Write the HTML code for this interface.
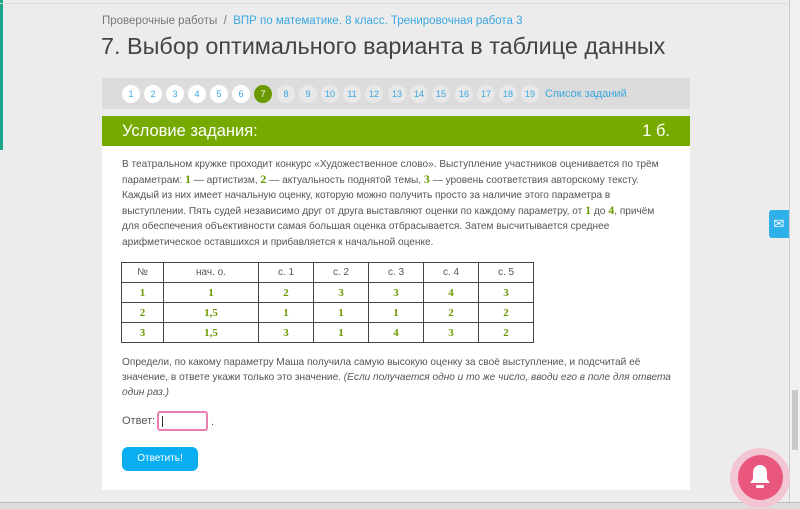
<!DOCTYPE html>
<html><head><meta charset="utf-8"><style>
*{margin:0;padding:0;box-sizing:border-box}
body{width:800px;height:509px;background:#ececec;font-family:"Liberation Sans",sans-serif;position:relative;overflow:hidden;color:#555}
.abs{position:absolute}
.bc{left:102px;top:15px;font-size:11.5px;color:#777}
.bc span{color:#3aa7e0}
h1{position:absolute;left:101px;top:33px;font-size:23.4px;font-weight:normal;color:#444}
.nav{left:102px;top:78px;width:588px;height:31px;background:#dcdcdc}
.c{position:absolute;top:7px;width:18px;height:18px;border-radius:50%;font-size:9px;text-align:center;line-height:18px;color:#3aa7e0;background:#e8e8e8}
.c.w{background:#fff}.c.a{background:#6a9a00;color:#fff}
.hd{left:102px;top:116px;width:588px;height:30px;background:#77aa00;color:#fff;font-size:16.5px;line-height:30px;padding-left:20px}
.bd{left:102px;top:146px;width:588px;height:344px;background:#fff}
.t{left:122px;top:157px;width:545px;font-size:10.1px;line-height:15.6px;color:#555}
.g{color:#6a9a00;font-family:"Liberation Serif",serif;font-size:12px;font-weight:bold;line-height:0}
table{position:absolute;left:121px;top:262px;border-collapse:collapse;font-size:10px}
td{border:1px solid #444;height:20px;text-align:center;color:#555}
td.g{color:#6a9a00;font-size:11px;line-height:normal}
</style></head><body>
<div class="abs" style="left:0;top:0;width:3px;height:150px;background:#1aa58a"></div>
<div class="abs" style="left:0;top:3px;width:790px;height:1px;background:#ddd"></div>
<div class="abs" style="left:789px;top:0;width:11px;height:509px;background:#f0f0f0;border-left:1px solid #ccc"></div>
<div class="abs" style="left:792px;top:390px;width:6px;height:60px;background:#c8c8c8"></div>
<div class="abs" style="left:0;top:502px;width:800px;height:7px;background:#ddd;border-top:1px solid #bbb"></div>
<div class="abs bc">Проверочные работы &nbsp;/&nbsp; <span>ВПР по математике. 8 класс. Тренировочная работа 3</span></div>
<h1>7. Выбор оптимального варианта в таблице данных</h1>
<div class="abs nav">
<div class="c w" style="left:20px">1</div><div class="c w" style="left:42px">2</div><div class="c w" style="left:64px">3</div><div class="c w" style="left:86px">4</div><div class="c w" style="left:108px">5</div><div class="c w" style="left:130px">6</div><div class="c a" style="left:152px">7</div><div class="c" style="left:175px">8</div><div class="c" style="left:197px">9</div><div class="c" style="left:219px">10</div><div class="c" style="left:241px">11</div><div class="c" style="left:263px">12</div><div class="c" style="left:286px">13</div><div class="c" style="left:308px">14</div><div class="c" style="left:330px">15</div><div class="c" style="left:353px">16</div><div class="c" style="left:375px">17</div><div class="c" style="left:397px">18</div><div class="c" style="left:419px">19</div>
<div class="abs" style="left:443px;top:10px;font-size:11px;color:#3aa7e0">Список заданий</div>
</div>
<div class="abs hd">Условие задания:<span style="position:absolute;right:20px">1 б.</span></div>
<div class="abs bd"></div>
<div class="abs t">В театральном кружке проходит конкурс «Художественное слово». Выступление участников оценивается по трём параметрам: <span class="g">1</span> — артистизм, <span class="g">2</span> — актуальность поднятой темы, <span class="g">3</span> — уровень соответствия авторскому тексту. Каждый из них имеет начальную оценку, которую можно получить просто за наличие этого параметра в выступлении. Пять судей независимо друг от друга выставляют оценки по каждому параметру, от <span class="g">1</span> до <span class="g">4</span>, причём для обеспечения объективности самая большая оценка отбрасывается. Затем высчитывается среднее арифметическое оставшихся и прибавляется к начальной оценке.</div>
<table>
<tr><td style="width:42px">№</td><td style="width:95px">нач. о.</td><td style="width:55px">с. 1</td><td style="width:55px">с. 2</td><td style="width:55px">с. 3</td><td style="width:55px">с. 4</td><td style="width:55px">с. 5</td></tr>
<tr><td class="g">1</td><td class="g">1</td><td class="g">2</td><td class="g">3</td><td class="g">3</td><td class="g">4</td><td class="g">3</td></tr>
<tr><td class="g">2</td><td class="g">1,5</td><td class="g">1</td><td class="g">1</td><td class="g">1</td><td class="g">2</td><td class="g">2</td></tr>
<tr><td class="g">3</td><td class="g">1,5</td><td class="g">3</td><td class="g">1</td><td class="g">4</td><td class="g">3</td><td class="g">2</td></tr>
</table>
<div class="abs t" style="top:355px;width:560px;line-height:15px">Определи, по какому параметру Маша получила самую высокую оценку за своё выступление, и подсчитай её значение, в ответе укажи только это значение. <i>(Если получается одно и то же число, вводи его в поле для ответа один раз.)</i></div>
<div class="abs" style="left:122px;top:415px;font-size:11px">Ответ:</div>
<div class="abs" style="left:157px;top:411px;width:51px;height:20px;border:2px solid #e87fb0;border-radius:3px"><div style="position:absolute;left:3px;top:3px;width:1px;height:11px;background:#333"></div></div>
<div class="abs" style="left:211px;top:416px;font-size:11px">.</div>
<div class="abs" style="left:122px;top:447px;width:76px;height:24px;background:#08aef0;border-radius:6px;color:#fff;font-size:10px;text-align:center;line-height:24px">Ответить!</div>
<div class="abs" style="left:769px;top:210px;width:20px;height:28px;background:#2fb0ea;border-radius:3px 0 0 3px;color:#fff;font-size:13px;text-align:center;line-height:28px">✉</div>
<div class="abs" style="left:730px;top:448px;width:60px;height:60px;border-radius:50%;background:#f3c6d3"></div>
<div class="abs" style="left:738px;top:455px;width:45px;height:45px;border-radius:50%;background:#e9577f"></div>
<svg class="abs" style="left:748px;top:463px" width="24" height="28" viewBox="0 0 24 28"><path d="M12 2c-5 0-7 4-7 8v6l-3 4h20l-3-4v-6c0-4-2-8-7-8z" fill="#fff"/><rect x="8" y="22" width="8" height="3" rx="1.5" fill="#fff"/></svg>
</body></html>
